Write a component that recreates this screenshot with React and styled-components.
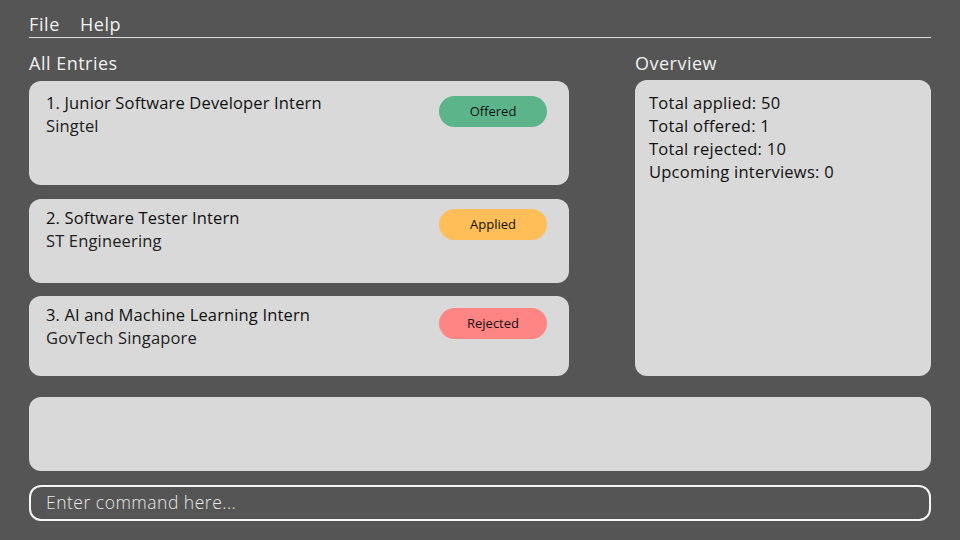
import React from 'react';
import styled, { createGlobalStyle } from 'styled-components';

const GlobalStyle = createGlobalStyle`
	html, body {
		margin: 0;
		padding: 0;
		background: #555555;
	}
	body {
		font-family: 'Open Sans', 'Liberation Sans', sans-serif;
	}
`;

const entries = [
	{ id: 1, title: 'Junior Software Developer Intern', company: 'Singtel', status: 'Offered', height: 104, pt: 10, badgeTop: 5 },
	{ id: 2, title: 'Software Tester Intern', company: 'ST Engineering', status: 'Applied', height: 84, pt: 7, badgeTop: 3 },
	{ id: 3, title: 'AI and Machine Learning Intern', company: 'GovTech Singapore', status: 'Rejected', height: 80, pt: 7, badgeTop: 5 },
];

const stats = [
	['Total applied', 50],
	['Total offered', 1],
	['Total rejected', 10],
	['Upcoming interviews', 0],
];

const badgeColors = {
	Offered: '#5bb48a',
	Applied: '#ffbe58',
	Rejected: '#ff8585',
};

function App() {
	return (
		<Container>
			<GlobalStyle />
			<MenuBar>
				<MenuItem>File</MenuItem>
				<MenuItem>Help</MenuItem>
			</MenuBar>
			<Main>
				<Column>
					<Heading>All Entries</Heading>
					<CardList>
						{entries.map(entry => (
							<Card key={entry.id} $height={entry.height} $pt={entry.pt}>
								<Info>
									<Title>
										{entry.id}. {entry.title}
									</Title>
									<Company>{entry.company}</Company>
								</Info>
								<Badge $color={badgeColors[entry.status]} $top={entry.badgeTop}>
									{entry.status}
								</Badge>
							</Card>
						))}
					</CardList>
				</Column>
				<Column>
					<Heading>Overview</Heading>
					<Overview>
						{stats.map(([label, value]) => (
							<StatLine key={label}>
								{label}: {value}
							</StatLine>
						))}
					</Overview>
				</Column>
			</Main>
			<ResultBox />
			<CommandBox placeholder="Enter command here..." />
		</Container>
	);
}

export default App;

const Container = styled.div`
	width: 902px;
	margin: 0 auto;
	padding-top: 12px;
	display: flex;
	flex-direction: column;
`;

const MenuBar = styled.div`
	display: flex;
	gap: 20px;
	height: 25px;
	border-bottom: 1px solid #dcdcdc;
`;

const MenuItem = styled.div`
	color: #f2f2f2;
	font-size: 18px;
	line-height: 25px;
	letter-spacing: 0.6px;
`;

const Main = styled.div`
	display: grid;
	grid-template-columns: 540px 296px;
	justify-content: space-between;
	margin-top: 13px;
`;

const Column = styled.div`
	display: flex;
	flex-direction: column;
`;

const Heading = styled.div`
	color: #f0f0f0;
	font-size: 18px;
	line-height: 24px;
	letter-spacing: 0.5px;
	margin-bottom: 5px;
`;

const CardList = styled.div`
	display: flex;
	flex-direction: column;
	gap: 14px;
	margin-top: 1px;

	& > :last-child {
		margin-top: -1px;
	}
`;

const Card = styled.div`
	box-sizing: border-box;
	height: ${p => p.$height}px;
	background: #d9d9d9;
	border-radius: 12px;
	padding: ${p => p.$pt}px 22px 0 17px;
	display: flex;
	justify-content: space-between;
	align-items: flex-start;
`;

const Info = styled.div`
	display: flex;
	flex-direction: column;
`;

const Title = styled.div`
	color: #111;
	font-size: 16.5px;
	line-height: 23px;
	letter-spacing: 0.15px;
`;

const Company = styled.div`
	color: #222;
	font-size: 16.5px;
	line-height: 23px;
	letter-spacing: 0.15px;
`;

const Badge = styled.div`
	width: 108px;
	height: 31px;
	margin-top: ${p => p.$top}px;
	border-radius: 16px;
	background: ${p => p.$color};
	color: #111;
	font-size: 13px;
	line-height: 30px;
	display: flex;
	align-items: flex-start;
	justify-content: center;
`;

const Overview = styled.div`
	box-sizing: border-box;
	height: 296px;
	background: #d9d9d9;
	border-radius: 12px;
	padding: 11px 14px;
`;

const StatLine = styled.div`
	color: #111;
	font-size: 16.5px;
	line-height: 23px;
	letter-spacing: 0.25px;
`;

const ResultBox = styled.div`
	height: 74px;
	margin-top: 21px;
	background: #d9d9d9;
	border-radius: 12px;
`;

const CommandBox = styled.input`
	box-sizing: border-box;
	height: 36px;
	margin-top: 14px;
	padding: 0 15px 3px;
	background: transparent;
	border: 2px solid #f5f5f5;
	border-radius: 12px;
	color: #eee;
	font-family: 'Open Sans', 'Liberation Sans', sans-serif;
	font-size: 17.5px;
	font-weight: 300;
	letter-spacing: 0.5px;
	outline: none;

	&::placeholder {
		color: #e8e8e8;
	}
`;
